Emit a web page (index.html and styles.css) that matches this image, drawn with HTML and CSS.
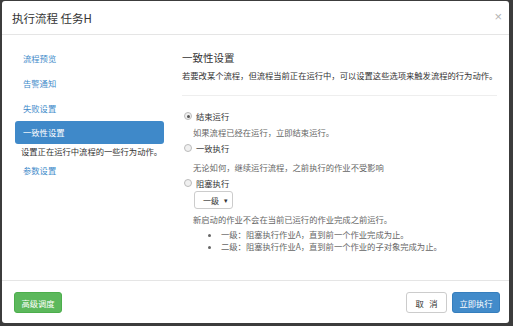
FILE: index.html
```html
<!DOCTYPE html>
<html lang="zh-CN">
<head>
    <meta charset="UTF-8">
    <meta name="viewport" content="width=device-width, initial-scale=1.0">
    <title>执行流程</title>
    <link rel="stylesheet" href="styles.css">
</head>
<body>
    <div class="modal">
        <div class="modal-header">
            <h4>执行流程 任务H</h4>
            <span class="close">&times;</span>
        </div>

        <div class="modal-body">
            <ul class="side-nav">
                <li><a>流程预览</a></li>
                <li><a>告警通知</a></li>
                <li><a>失败设置</a></li>
                <li class="active"><a>一致性设置</a></li>
                <li class="nav-note">设置正在运行中流程的一些行为动作。</li>
                <li><a>参数设置</a></li>
            </ul>

            <div class="panel">
                <h3>一致性设置</h3>
                <p class="lead">若要改某个流程，但流程当前正在运行中，可以设置这些选项来触发流程的行为动作。</p>
                <hr>

                <label class="radio"><span class="dot checked"></span>结束运行</label>
                <p class="help help-1">如果流程已经在运行，立即结束运行。</p>

                <label class="radio radio-2"><span class="dot"></span>一致执行</label>
                <p class="help help-2">无论如何，继续运行流程，之前执行的作业不受影响</p>

                <label class="radio radio-3"><span class="dot"></span>阻塞执行</label>
                <div class="select"><span>一级</span><span class="caret">&#9662;</span></div>
                <p class="help help-3">新启动的作业不会在当前已运行的作业完成之前运行。</p>
                <ul class="levels">
                    <li>一级：阻塞执行作业A，直到前一个作业完成为止。</li>
                    <li>二级：阻塞执行作业A，直到前一个作业的子对象完成为止。</li>
                </ul>
            </div>
        </div>

        <div class="modal-footer">
            <button class="btn btn-success">高级调度</button>
            <div class="actions">
                <button class="btn btn-default">取&nbsp;&nbsp;&nbsp;消</button>
                <button class="btn btn-primary">立即执行</button>
            </div>
        </div>
    </div>
</body>
</html>
```

FILE: styles.css
```css
body {
    margin: 0;
    width: 513px;
    height: 326px;
    background-color: #3c3c3c;
    font-family: "Noto Sans CJK SC", "Liberation Sans", sans-serif;
    font-size: 8.3px;
    color: #333;
    overflow: hidden;
}
.modal {
    margin: 1px 4px 0 2px;
    height: 322px;
    background: white;
    border-radius: 3px;
    display: flex;
    flex-direction: column;
}
.modal-header {
    height: 33px;
    border-bottom: 1px solid #e5e5e5;
    display: flex;
    align-items: center;
    justify-content: space-between;
    padding: 0 7px 0 10px;
}
.modal-header h4 {
    margin: 0;
    font-size: 11.5px;
    font-weight: normal;
    color: #333;
}
.close {
    color: #b5b5b5;
    font-size: 13px;
    font-family: "Liberation Sans", sans-serif;
    margin-top: -3px;
}
.modal-body {
    flex: 1;
    display: grid;
    grid-template-columns: 149px 1fr;
    column-gap: 18px;
    padding: 12px 13px 0 13px;
}
.side-nav {
    list-style: none;
    margin: 0;
    padding: 0;
}
.side-nav li {
    height: 23px;
    line-height: 23px;
    margin-bottom: 2px;
    border-radius: 3px;
}
.side-nav li a {
    display: block;
    padding-left: 8px;
    color: #428bca;
}
.side-nav li.active {
    background-color: #3f89c9;
    margin-top: -1px;
}
.side-nav li.active a {
    color: white;
}
.side-nav li.nav-note {
    height: 11px;
    line-height: 11px;
    margin: 0 -8px 0 6px;
    white-space: nowrap;
    color: #333;
}
.side-nav li.nav-note + li {
    margin-top: 2px;
}
.panel {
    padding-top: 4px;
    display: flex;
    flex-direction: column;
    align-items: flex-start;
}
.panel h3 {
    margin: 0;
    font-size: 10.5px;
    font-weight: normal;
    line-height: 14px;
}
.lead {
    margin: 4px 0 0 0;
    line-height: 12px;
    white-space: nowrap;
}
hr {
    align-self: stretch;
    margin: 14px 0 0 0;
    border: 0;
    border-top: 1px solid #eee;
}
.radio {
    display: flex;
    align-items: center;
    line-height: 12px;
    margin-top: 14px;
    color: #333;
}
.radio-2 { margin-top: 4px; }
.radio-3 { margin-top: 4px; }
.dot {
    width: 6px;
    height: 6px;
    border: 1px solid #bbb;
    border-radius: 50%;
    background: #f0f0f0;
    margin: 0 4px 0 2px;
    position: relative;
}
.dot.checked::after {
    content: "";
    position: absolute;
    left: 1.5px;
    top: 1.5px;
    width: 3px;
    height: 3px;
    border-radius: 50%;
    background: #555;
}
.help {
    margin: 4px 0 0 11px;
    line-height: 12px;
    color: #666;
}
.help-2 { margin-top: 7px; }
.select {
    margin: 2px 0 0 12px;
    width: 39px;
    height: 18px;
    box-sizing: border-box;
    border: 1px solid #ccc;
    border-radius: 3px;
    display: flex;
    align-items: center;
    justify-content: space-between;
    padding: 0 4px 0 8px;
    color: #333;
    font-size: 8px;
    white-space: nowrap;
}
.caret {
    font-size: 7px;
}
.levels {
    margin: 3px 0 0 0;
    padding-left: 39px;
    line-height: 12px;
    color: #666;
}
.modal-footer {
    height: 43px;
    box-sizing: border-box;
    border-top: 1px solid #e5e5e5;
    display: flex;
    justify-content: space-between;
    align-items: flex-start;
    padding: 11px 9px 0 12px;
}
.actions {
    display: flex;
    gap: 5px;
}
.btn {
    font-family: inherit;
    font-size: 8.3px;
    height: 21px;
    padding: 0;
    border-radius: 3px;
    border: 1px solid transparent;
    margin: 0;
    white-space: nowrap;
    cursor: pointer;
}
.btn-success {
    background-color: #5cb85c;
    border-color: #4cae4c;
    color: white;
    width: 48px;
}
.btn-default {
    background-color: white;
    border-color: #ccc;
    color: #333;
    width: 41px;
}
.btn-primary {
    background-color: #428bca;
    border-color: #357ebd;
    color: white;
    width: 48px;
}
```
